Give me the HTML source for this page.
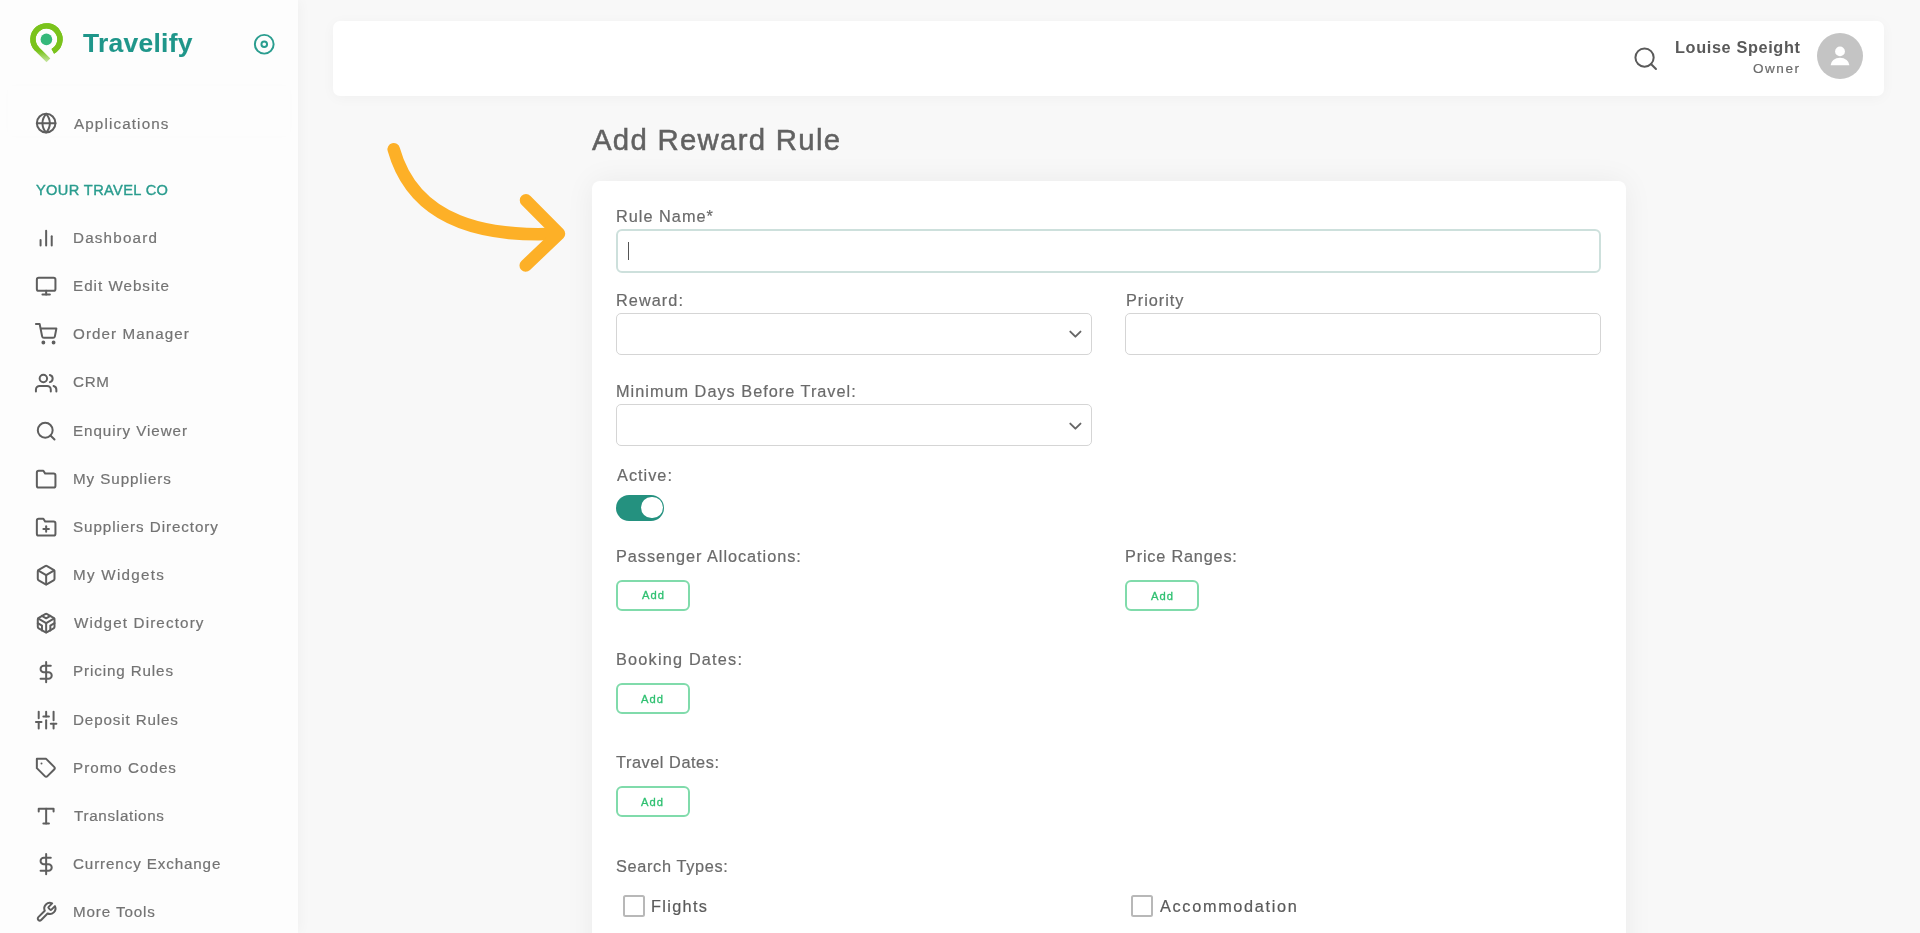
<!DOCTYPE html>
<html><head><meta charset="utf-8"><title>Add Reward Rule</title><style>
*{margin:0;padding:0;box-sizing:border-box}
html,body{width:1920px;height:933px;overflow:hidden;background:#f8f8f8;font-family:"Liberation Sans",sans-serif}
.t{position:absolute;white-space:nowrap;font-weight:400;will-change:transform;-webkit-text-stroke:0.2px currentColor}
.ic{position:absolute;overflow:visible}
.sidebar{position:absolute;left:0;top:0;width:298px;height:933px;background:#fdfdfd;box-shadow:2px 0 12px rgba(0,0,0,0.035)}
.appbox{position:absolute;left:8px;top:86px;width:282px;height:50px;border-radius:6px;box-shadow:0 0 8px rgba(0,0,0,0.012)}
.header{position:absolute;left:333px;top:21px;width:1551px;height:75px;background:#fff;border-radius:7px;box-shadow:0 2px 14px rgba(0,0,0,0.035)}
.avatar{position:absolute;left:1817px;top:33px;width:46px;height:46px;border-radius:50%;background:#c4c4c4}
.card{position:absolute;left:592px;top:181px;width:1034px;height:800px;background:#fff;border-radius:8px;box-shadow:0 0 30px rgba(0,0,0,0.06)}
.inp{position:absolute;border:1.2px solid #d5d5d5;border-radius:5px;background:#fff}
.inp.focus{border:2px solid #cde0dc;border-radius:6px}
.toggle{position:absolute;left:616px;top:495.2px;width:48.2px;height:25.4px;border-radius:13px;background:#24917f}
.knob{position:absolute;left:25.4px;top:1.7px;width:21.4px;height:21.4px;border-radius:50%;background:#fff}
.addbtn{position:absolute;border:2px solid #80dbab;border-radius:6px;background:#fff}
.cb{position:absolute;width:22px;height:22px;border:2px solid #b8b8b8;border-radius:2.5px;background:#fff}
</style></head>
<body>
<div class="sidebar"></div>
<svg class="ic" style="left:0;top:0;width:100px;height:80px" viewBox="0 0 100 80">
<defs><linearGradient id="lg" gradientUnits="userSpaceOnUse" x1="0" y1="51" x2="0" y2="63"><stop offset="0" stop-color="#7ac31c"/><stop offset="1" stop-color="#cfe9b0"/></linearGradient></defs>
<path d="M52.8 51.3 A13.5 13.5 0 1 0 36.9 48.9 L48.4 60.3" fill="none" stroke="url(#lg)" stroke-width="5.4"/>
<path d="M52.8 51.3 A13.5 13.5 0 1 0 36.9 48.9" fill="none" stroke="#7ac31c" stroke-width="5.4"/>
<circle cx="46.4" cy="39.4" r="5.8" fill="#35b87a"/>
</svg>
<span class="t" style="left:82.50px;top:30.00px;font-size:26.45px;line-height:26.45px;letter-spacing:0.275px;color:#1f968a;font-weight:700;-webkit-text-stroke:0.1px currentColor;">Travelify</span>
<svg class="ic" style="left:253.20px;top:33.30px;width:22.5px;height:22.5px" viewBox="0 0 24 24" fill="none" stroke="#2a9d8f" stroke-width="2.1" stroke-linecap="round" stroke-linejoin="round"><circle cx="12" cy="12" r="10"/><circle cx="12" cy="12" r="3"/></svg>
<div class="appbox"></div>
<svg class="ic" style="left:34.60px;top:112.44px;width:22.3px;height:22.3px" viewBox="0 0 24 24" fill="none" stroke="#5e5e5e" stroke-width="2.15" stroke-linecap="round" stroke-linejoin="round"><circle cx="12" cy="12" r="10"/><line x1="2" y1="12" x2="22" y2="12"/><path d="M12 2a15.3 15.3 0 0 1 4 10 15.3 15.3 0 0 1-4 10 15.3 15.3 0 0 1-4-10 15.3 15.3 0 0 1 4-10z"/></svg>
<span class="t" style="left:73.50px;top:116.00px;font-size:15.2px;line-height:15.2px;letter-spacing:1.136px;color:#737373;">Applications</span>
<span class="t" style="left:35.50px;top:183.00px;font-size:14.6px;line-height:14.6px;letter-spacing:0.377px;color:#2a9c8e;-webkit-text-stroke:0.4px currentColor;">YOUR TRAVEL CO</span>
<svg class="ic" style="left:34.70px;top:227.14px;width:22.3px;height:22.3px" viewBox="0 0 24 24" fill="none" stroke="#5e5e5e" stroke-width="2.15" stroke-linecap="round" stroke-linejoin="round"><line x1="18" y1="20" x2="18" y2="10"/><line x1="12" y1="20" x2="12" y2="4"/><line x1="6" y1="20" x2="6" y2="14"/></svg>
<span class="t" style="left:73.00px;top:230.00px;font-size:15.2px;line-height:15.2px;letter-spacing:1.200px;color:#737373;">Dashboard</span>
<svg class="ic" style="left:34.70px;top:275.30px;width:22.3px;height:22.3px" viewBox="0 0 24 24" fill="none" stroke="#5e5e5e" stroke-width="2.15" stroke-linecap="round" stroke-linejoin="round"><rect x="2" y="3" width="20" height="14" rx="2" ry="2"/><line x1="8" y1="21" x2="16" y2="21"/><line x1="12" y1="17" x2="12" y2="21"/></svg>
<span class="t" style="left:73.00px;top:278.00px;font-size:15.2px;line-height:15.2px;letter-spacing:1.000px;color:#737373;">Edit Website</span>
<svg class="ic" style="left:34.70px;top:323.46px;width:22.3px;height:22.3px" viewBox="0 0 24 24" fill="none" stroke="#5e5e5e" stroke-width="2.15" stroke-linecap="round" stroke-linejoin="round"><circle cx="9" cy="21" r="1"/><circle cx="20" cy="21" r="1"/><path d="M1 1h4l2.68 13.39a2 2 0 0 0 2 1.61h9.72a2 2 0 0 0 2-1.61L23 6H6"/></svg>
<span class="t" style="left:73.00px;top:326.00px;font-size:15.2px;line-height:15.2px;letter-spacing:1.075px;color:#737373;">Order Manager</span>
<svg class="ic" style="left:34.70px;top:371.62px;width:22.3px;height:22.3px" viewBox="0 0 24 24" fill="none" stroke="#5e5e5e" stroke-width="2.15" stroke-linecap="round" stroke-linejoin="round"><path d="M17 21v-2a4 4 0 0 0-4-4H5a4 4 0 0 0-4 4v2"/><circle cx="9" cy="7" r="4"/><path d="M23 21v-2a4 4 0 0 0-3-3.87"/><path d="M16 3.13a4 4 0 0 1 0 7.75"/></svg>
<span class="t" style="left:73.00px;top:374.00px;font-size:15.2px;line-height:15.2px;letter-spacing:0.700px;color:#737373;">CRM</span>
<svg class="ic" style="left:34.70px;top:419.78px;width:22.3px;height:22.3px" viewBox="0 0 24 24" fill="none" stroke="#5e5e5e" stroke-width="2.15" stroke-linecap="round" stroke-linejoin="round"><circle cx="11" cy="11" r="8"/><line x1="21" y1="21" x2="16.65" y2="16.65"/></svg>
<span class="t" style="left:73.00px;top:423.00px;font-size:15.2px;line-height:15.2px;letter-spacing:0.931px;color:#737373;">Enquiry Viewer</span>
<svg class="ic" style="left:34.70px;top:467.94px;width:22.3px;height:22.3px" viewBox="0 0 24 24" fill="none" stroke="#5e5e5e" stroke-width="2.15" stroke-linecap="round" stroke-linejoin="round"><path d="M22 19a2 2 0 0 1-2 2H4a2 2 0 0 1-2-2V5a2 2 0 0 1 2-2h5l2 3h9a2 2 0 0 1 2 2z"/></svg>
<span class="t" style="left:73.00px;top:471.00px;font-size:15.2px;line-height:15.2px;letter-spacing:0.918px;color:#737373;">My Suppliers</span>
<svg class="ic" style="left:34.70px;top:516.10px;width:22.3px;height:22.3px" viewBox="0 0 24 24" fill="none" stroke="#5e5e5e" stroke-width="2.15" stroke-linecap="round" stroke-linejoin="round"><path d="M22 19a2 2 0 0 1-2 2H4a2 2 0 0 1-2-2V5a2 2 0 0 1 2-2h5l2 3h9a2 2 0 0 1 2 2z"/><line x1="12" y1="11" x2="12" y2="17"/><line x1="9" y1="14" x2="15" y2="14"/></svg>
<span class="t" style="left:73.00px;top:519.00px;font-size:15.2px;line-height:15.2px;letter-spacing:0.922px;color:#737373;">Suppliers Directory</span>
<svg class="ic" style="left:34.70px;top:564.26px;width:22.3px;height:22.3px" viewBox="0 0 24 24" fill="none" stroke="#5e5e5e" stroke-width="2.15" stroke-linecap="round" stroke-linejoin="round"><path d="M21 16V8a2 2 0 0 0-1-1.73l-7-4a2 2 0 0 0-2 0l-7 4A2 2 0 0 0 3 8v8a2 2 0 0 0 1 1.73l7 4a2 2 0 0 0 2 0l7-4A2 2 0 0 0 21 16z"/><polyline points="3.27 6.96 12 12.01 20.73 6.96"/><line x1="12" y1="22.08" x2="12" y2="12"/></svg>
<span class="t" style="left:73.00px;top:567.00px;font-size:15.2px;line-height:15.2px;letter-spacing:1.289px;color:#737373;">My Widgets</span>
<svg class="ic" style="left:34.70px;top:612.42px;width:22.3px;height:22.3px" viewBox="0 0 24 24" fill="none" stroke="#5e5e5e" stroke-width="2.15" stroke-linecap="round" stroke-linejoin="round"><path d="M21 16V8a2 2 0 0 0-1-1.73l-7-4a2 2 0 0 0-2 0l-7 4A2 2 0 0 0 3 8v8a2 2 0 0 0 1 1.73l7 4a2 2 0 0 0 2 0l7-4A2 2 0 0 0 21 16z"/><polyline points="7.5 4.21 12 6.81 16.5 4.21"/><polyline points="7.5 19.79 7.5 14.6 3 12"/><polyline points="21 12 16.5 14.6 16.5 19.79"/><polyline points="3.27 6.96 12 12.01 20.73 6.96"/><line x1="12" y1="22.08" x2="12" y2="12"/></svg>
<span class="t" style="left:74.00px;top:615.00px;font-size:15.2px;line-height:15.2px;letter-spacing:1.147px;color:#737373;">Widget Directory</span>
<svg class="ic" style="left:34.70px;top:660.58px;width:22.3px;height:22.3px" viewBox="0 0 24 24" fill="none" stroke="#5e5e5e" stroke-width="2.15" stroke-linecap="round" stroke-linejoin="round"><line x1="12" y1="1" x2="12" y2="23"/><path d="M17 5H9.5a3.5 3.5 0 0 0 0 7h5a3.5 3.5 0 0 1 0 7H6"/></svg>
<span class="t" style="left:73.00px;top:663.00px;font-size:15.2px;line-height:15.2px;letter-spacing:0.875px;color:#737373;">Pricing Rules</span>
<svg class="ic" style="left:34.70px;top:708.74px;width:22.3px;height:22.3px" viewBox="0 0 24 24" fill="none" stroke="#5e5e5e" stroke-width="2.15" stroke-linecap="round" stroke-linejoin="round"><line x1="4" y1="21" x2="4" y2="14"/><line x1="4" y1="10" x2="4" y2="3"/><line x1="12" y1="21" x2="12" y2="12"/><line x1="12" y1="8" x2="12" y2="3"/><line x1="20" y1="21" x2="20" y2="16"/><line x1="20" y1="12" x2="20" y2="3"/><line x1="1" y1="14" x2="7" y2="14"/><line x1="9" y1="8" x2="15" y2="8"/><line x1="17" y1="16" x2="23" y2="16"/></svg>
<span class="t" style="left:73.00px;top:712.00px;font-size:15.2px;line-height:15.2px;letter-spacing:0.867px;color:#737373;">Deposit Rules</span>
<svg class="ic" style="left:34.70px;top:756.90px;width:22.3px;height:22.3px" viewBox="0 0 24 24" fill="none" stroke="#5e5e5e" stroke-width="2.15" stroke-linecap="round" stroke-linejoin="round"><path d="M20.59 13.41l-7.17 7.17a2 2 0 0 1-2.83 0L2 12V2h10l8.59 8.59a2 2 0 0 1 0 2.82z"/><line x1="7" y1="7" x2="7.01" y2="7"/></svg>
<span class="t" style="left:73.00px;top:760.00px;font-size:15.2px;line-height:15.2px;letter-spacing:1.010px;color:#737373;">Promo Codes</span>
<svg class="ic" style="left:34.70px;top:805.06px;width:22.3px;height:22.3px" viewBox="0 0 24 24" fill="none" stroke="#5e5e5e" stroke-width="2.15" stroke-linecap="round" stroke-linejoin="round"><polyline points="4 7 4 4 20 4 20 7"/><line x1="9" y1="20" x2="15" y2="20"/><line x1="12" y1="4" x2="12" y2="20"/></svg>
<span class="t" style="left:74.00px;top:808.00px;font-size:15.2px;line-height:15.2px;letter-spacing:0.709px;color:#737373;">Translations</span>
<svg class="ic" style="left:34.70px;top:853.22px;width:22.3px;height:22.3px" viewBox="0 0 24 24" fill="none" stroke="#5e5e5e" stroke-width="2.15" stroke-linecap="round" stroke-linejoin="round"><line x1="12" y1="1" x2="12" y2="23"/><path d="M17 5H9.5a3.5 3.5 0 0 0 0 7h5a3.5 3.5 0 0 1 0 7H6"/></svg>
<span class="t" style="left:73.00px;top:856.00px;font-size:15.2px;line-height:15.2px;letter-spacing:0.875px;color:#737373;">Currency Exchange</span>
<svg class="ic" style="left:34.70px;top:901.38px;width:22.3px;height:22.3px" viewBox="0 0 24 24" fill="none" stroke="#5e5e5e" stroke-width="2.15" stroke-linecap="round" stroke-linejoin="round"><path d="M14.7 6.3a1 1 0 0 0 0 1.4l1.6 1.6a1 1 0 0 0 1.4 0l3.77-3.77a6 6 0 0 1-7.94 7.94l-6.91 6.91a2.12 2.12 0 0 1-3-3l6.91-6.91a6 6 0 0 1 7.94-7.94l-3.76 3.76z"/></svg>
<span class="t" style="left:73.00px;top:904.00px;font-size:15.2px;line-height:15.2px;letter-spacing:0.878px;color:#737373;">More Tools</span>
<div class="header"></div>
<svg class="ic" style="left:1631.50px;top:44.50px;width:27.4px;height:27.4px" viewBox="0 0 24 24" fill="none" stroke="#5a5a5a" stroke-width="1.75" stroke-linecap="round" stroke-linejoin="round"><circle cx="11" cy="11" r="8"/><line x1="21" y1="21" x2="16.65" y2="16.65"/></svg>
<span class="t" style="left:1674.50px;top:39.00px;font-size:16.28px;line-height:16.28px;letter-spacing:0.638px;color:#595959;font-weight:700;-webkit-text-stroke:0px currentColor;">Louise Speight</span>
<span class="t" style="left:1753.00px;top:62.00px;font-size:13.52px;line-height:13.52px;letter-spacing:1.550px;color:#6a6a6a;">Owner</span>
<div class="avatar"><svg style="position:absolute;left:0;top:0" width="46" height="46" viewBox="0 0 46 46">
<circle cx="23" cy="18.4" r="4.9" fill="#fff"/><path d="M13.6 32.3 A9.4 7.6 0 0 1 32.4 32.3 Z" fill="#fff"/></svg></div>
<span class="t" style="left:591.50px;top:125.00px;font-size:29.36px;line-height:29.36px;letter-spacing:1.279px;color:#616161;-webkit-text-stroke:0.5px currentColor;">Add Reward Rule</span>
<svg class="ic" style="left:0;top:0;width:600px;height:300px" viewBox="0 0 600 300">
<path d="M393.7 149.2 C415 225 490 237 557 233.7" fill="none" stroke="#fdb027" stroke-width="12.5" stroke-linecap="round"/>
<polyline points="526 200.3 559 233.7 525.7 265.5" fill="none" stroke="#fdb027" stroke-width="12.5" stroke-linecap="round" stroke-linejoin="round"/>
</svg>
<div class="card"></div>
<span class="t" style="left:616.00px;top:208.00px;font-size:16.3px;line-height:16.3px;letter-spacing:1.011px;color:#6a6a6a;">Rule Name*</span>
<div class="inp focus" style="left:616px;top:229px;width:985px;height:44px"></div>
<div style="position:absolute;left:627.6px;top:241.6px;width:1.5px;height:18.3px;background:#555"></div>
<span class="t" style="left:616.00px;top:292.00px;font-size:16.3px;line-height:16.3px;letter-spacing:1.050px;color:#6a6a6a;">Reward:</span>
<div class="inp" style="left:616.3px;top:313.3px;width:476px;height:41.6px"></div>
<span class="t" style="left:1125.50px;top:292.00px;font-size:16.3px;line-height:16.3px;letter-spacing:0.957px;color:#6a6a6a;">Priority</span>
<div class="inp" style="left:1125.3px;top:313.3px;width:475.8px;height:41.6px"></div>
<span class="t" style="left:615.50px;top:383.00px;font-size:16.3px;line-height:16.3px;letter-spacing:1.008px;color:#6a6a6a;">Minimum Days Before Travel:</span>
<div class="inp" style="left:616.3px;top:403.8px;width:476px;height:42.6px"></div>
<span class="t" style="left:616.50px;top:467.00px;font-size:16.3px;line-height:16.3px;letter-spacing:1.017px;color:#6a6a6a;">Active:</span>
<div class="toggle"><div class="knob"></div></div>
<span class="t" style="left:616.00px;top:548.00px;font-size:16.3px;line-height:16.3px;letter-spacing:0.957px;color:#6a6a6a;">Passenger Allocations:</span>
<span class="t" style="left:1124.50px;top:548.00px;font-size:16.3px;line-height:16.3px;letter-spacing:0.800px;color:#6a6a6a;">Price Ranges:</span>
<div class="addbtn" style="left:616.3px;top:579.9px;width:73.5px;height:30.8px"></div>
<span class="t" style="left:641.50px;top:590.00px;font-size:11.2px;line-height:11.2px;letter-spacing:1.050px;color:#2fc071;-webkit-text-stroke:0.3px currentColor;">Add</span>
<div class="addbtn" style="left:1125.1px;top:580.2px;width:73.5px;height:30.8px"></div>
<span class="t" style="left:1150.50px;top:591.00px;font-size:11.2px;line-height:11.2px;letter-spacing:1.050px;color:#2fc071;-webkit-text-stroke:0.3px currentColor;">Add</span>
<span class="t" style="left:615.50px;top:651.00px;font-size:16.3px;line-height:16.3px;letter-spacing:1.192px;color:#6a6a6a;">Booking Dates:</span>
<div class="addbtn" style="left:616.2px;top:683.2px;width:73.5px;height:30.8px"></div>
<span class="t" style="left:641.00px;top:694.00px;font-size:11.2px;line-height:11.2px;letter-spacing:1.050px;color:#2fc071;-webkit-text-stroke:0.3px currentColor;">Add</span>
<span class="t" style="left:616.00px;top:754.00px;font-size:16.3px;line-height:16.3px;letter-spacing:0.558px;color:#6a6a6a;">Travel Dates:</span>
<div class="addbtn" style="left:616.2px;top:786.4px;width:73.5px;height:30.8px"></div>
<span class="t" style="left:641.00px;top:797.00px;font-size:11.2px;line-height:11.2px;letter-spacing:1.050px;color:#2fc071;-webkit-text-stroke:0.3px currentColor;">Add</span>
<span class="t" style="left:615.50px;top:858.00px;font-size:16.3px;line-height:16.3px;letter-spacing:0.675px;color:#6a6a6a;">Search Types:</span>
<div class="cb" style="left:622.5px;top:894.5px"></div>
<span class="t" style="left:650.50px;top:898.00px;font-size:16.3px;line-height:16.3px;letter-spacing:1.333px;color:#5a5a5a;">Flights</span>
<div class="cb" style="left:1131.2px;top:894.5px"></div>
<span class="t" style="left:1160.00px;top:898.00px;font-size:16.3px;line-height:16.3px;letter-spacing:1.675px;color:#5a5a5a;">Accommodation</span>
<svg class="ic" style="left:0;top:0;width:1200px;height:460px" viewBox="0 0 1200 460"><polyline points="1070.3 331.6 1075.4 336.7 1080.5 331.6" fill="none" stroke="#666" stroke-width="1.9" stroke-linecap="round" stroke-linejoin="round"/><polyline points="1070.3 423.6 1075.4 428.7 1080.5 423.6" fill="none" stroke="#666" stroke-width="1.9" stroke-linecap="round" stroke-linejoin="round"/></svg>
</body></html>
